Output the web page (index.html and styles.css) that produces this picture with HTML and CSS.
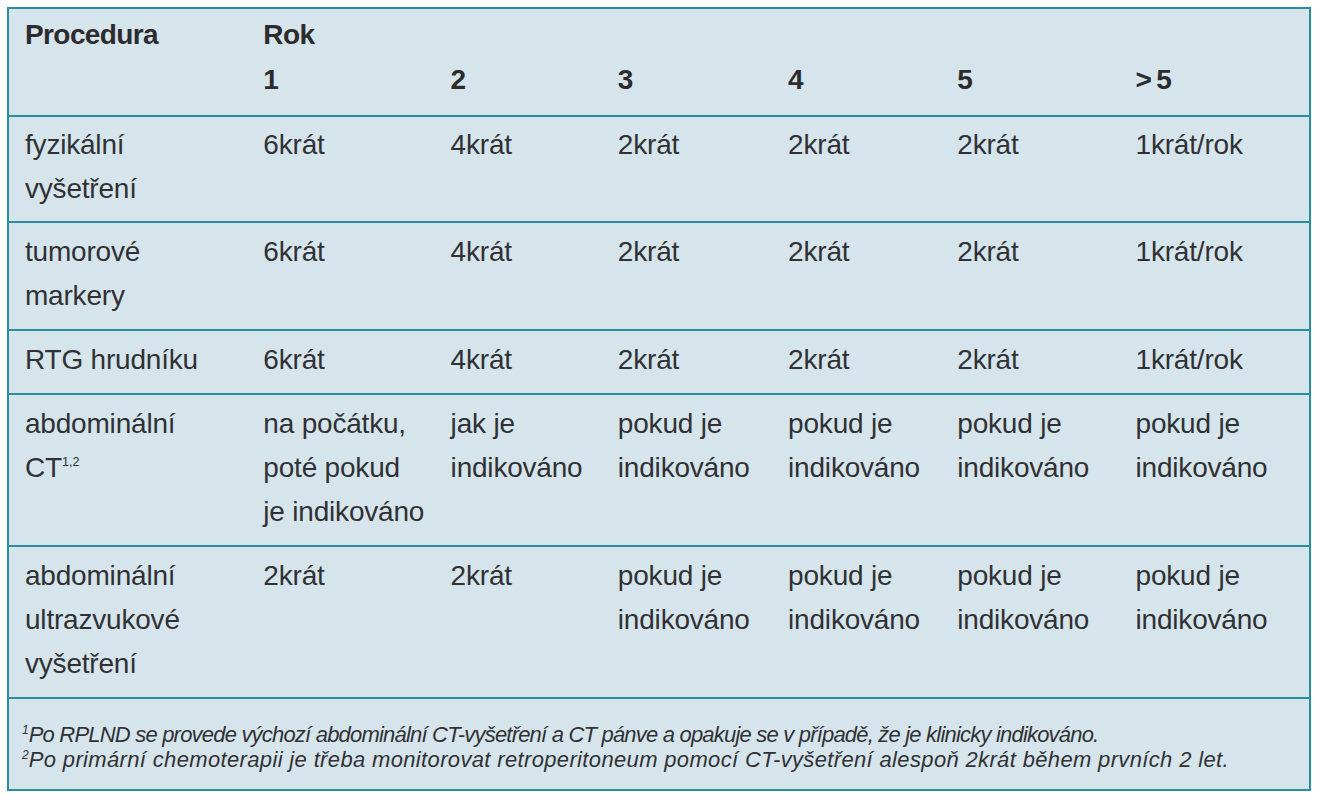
FILE: index.html
```html
<!DOCTYPE html>
<html lang="cs">
<head>
<meta charset="utf-8">
<title>Sledování</title>
<link rel="stylesheet" href="styles.css">
</head>
<body>
<table class="tbl">
  <colgroup>
    <col class="c1"><col class="c2"><col class="c3"><col class="c4"><col class="c5"><col class="c6"><col class="c7">
  </colgroup>
  <thead>
    <tr class="h1">
      <th rowspan="2" class="first">Procedura</th>
      <th colspan="6">Rok</th>
    </tr>
    <tr class="h2">
      <th>1</th><th>2</th><th>3</th><th>4</th><th>5</th><th>&gt;&thinsp;5</th>
    </tr>
  </thead>
  <tbody>
    <tr class="r1">
      <td class="first">fyzikální<br>vyšetření</td>
      <td>6krát</td><td>4krát</td><td>2krát</td><td>2krát</td><td>2krát</td><td>1krát/rok</td>
    </tr>
    <tr>
      <td class="first">tumorové<br>markery</td>
      <td>6krát</td><td>4krát</td><td>2krát</td><td>2krát</td><td>2krát</td><td>1krát/rok</td>
    </tr>
    <tr>
      <td class="first">RTG hrudníku</td>
      <td>6krát</td><td>4krát</td><td>2krát</td><td>2krát</td><td>2krát</td><td>1krát/rok</td>
    </tr>
    <tr>
      <td class="first">abdominální<br>CT<sup>1,2</sup></td>
      <td>na počátku,<br>poté pokud<br>je indikováno</td>
      <td>jak je<br>indikováno</td>
      <td>pokud je<br>indikováno</td>
      <td>pokud je<br>indikováno</td>
      <td>pokud je<br>indikováno</td>
      <td>pokud je<br>indikováno</td>
    </tr>
    <tr>
      <td class="first">abdominální<br>ultrazvukové<br>vyšetření</td>
      <td>2krát</td><td>2krát</td>
      <td>pokud je<br>indikováno</td>
      <td>pokud je<br>indikováno</td>
      <td>pokud je<br>indikováno</td>
      <td>pokud je<br>indikováno</td>
    </tr>
  </tbody>
  <tfoot>
    <tr>
      <td colspan="7" class="first notes">
        <p class="n1"><sup>1</sup>Po RPLND se provede výchozí abdominální CT-vyšetření a CT pánve a opakuje se v případě, že je klinicky indikováno.</p>
        <p class="n2"><sup>2</sup>Po primární chemoterapii je třeba monitorovat retroperitoneum pomocí CT-vyšetření alespoň 2krát během prvních 2 let.</p>
      </td>
    </tr>
  </tfoot>
</table>
</body>
</html>
```
FILE: styles.css
```css
html, body {
  background: #ffffff;
}
body {
  margin: 7px;
  font-family: "Liberation Sans", Arial, sans-serif;
  color: #313135;
}
.tbl {
  width: 1304px;
  table-layout: fixed;
  border-collapse: collapse;
  background: #d5e5eb;
  border: 2px solid #2a8e9e;
}
.c1 { width: 240px; }
.c2 { width: 187px; }
.c3 { width: 167px; }
.c4 { width: 170px; }
.c5 { width: 169px; }
.c6 { width: 178px; }
.c7 { width: 189px; }

th, td {
  text-align: left;
  vertical-align: top;
  font-size: 28px;
  line-height: 44px;
  padding: 7px 0 11px 15px;
  white-space: nowrap;
}
th {
  font-weight: bold;
  letter-spacing: -0.6px;
  color: #2c2c2e;
}
td {
  font-weight: normal;
  letter-spacing: -0.2px;
}
.first {
  padding-left: 16px;
  position: relative;
}
.h1 th {
  padding-top: 4px;
  padding-bottom: 0;
}
.h2 th {
  padding-top: 1px;
  padding-bottom: 13px;
}
.r1 td {
  padding-top: 6px;
  padding-bottom: 10px;
}
tbody tr, tfoot tr {
  border-top: 2px solid #2a8e9e;
}
tbody td.first::before,
tfoot td.first::before {
  content: "";
  position: absolute;
  left: -6px;
  top: -2px;
  width: 6px;
  height: 2px;
  background: #2a8e9e;
}
sup {
  font-size: 0.45em;
  line-height: 0;
  vertical-align: 0.9em;
  letter-spacing: 0;
}
.notes {
  padding-top: 23px;
  padding-bottom: 17px;
  padding-left: 13px;
}
.notes p {
  margin: 0;
  font-size: 22px;
  line-height: 25px;
  font-style: italic;
}
.notes .n1 {
  letter-spacing: -0.8px;
}
.notes .n2 {
  letter-spacing: 0.35px;
}
.notes sup {
  font-size: 0.55em;
  vertical-align: 0.7em;
}
```
